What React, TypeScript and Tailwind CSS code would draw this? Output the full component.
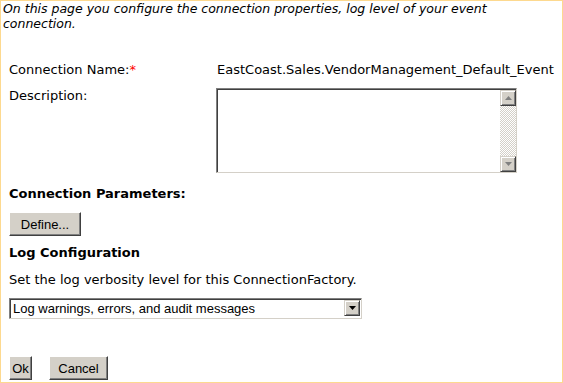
import React from "react";

const font = "font-['DejaVu_Sans',Verdana,sans-serif]";

function ArrowUp() {
  return (
    <svg width="7" height="4" viewBox="0 0 7 4" className="block">
      <path d="M3.5 0 L7 4 L0 4 Z" fill="#808080" />
    </svg>
  );
}

function ArrowDown({ color = "#808080" }: { color?: string }) {
  return (
    <svg width="7" height="4" viewBox="0 0 7 4" className="block">
      <path d="M0 0 L7 0 L3.5 4 Z" fill={color} />
    </svg>
  );
}

function ScrollBtn({ children }: { children: React.ReactNode }) {
  return (
    <div className="flex h-[16px] w-[16px] items-center justify-center border border-t-[#d4d0c8] border-l-[#d4d0c8] border-r-[#404040] border-b-[#404040] bg-[#d4d0c8] shadow-[inset_1px_1px_0_#ffffff,inset_-1px_-1px_0_#808080]">
      {children}
    </div>
  );
}

function Button({ label, className = "" }: { label: string; className?: string }) {
  return (
    <button
      type="button"
      className={
        "h-[24px] border border-t-[#ffffff] border-l-[#ffffff] border-r-[#404040] border-b-[#404040] bg-[#d4d0c8] text-[13px] leading-none text-black shadow-[inset_-1px_-1px_0_#808080] font-['Liberation_Sans',Arial,sans-serif] " +
        className
      }
    >
      {label}
    </button>
  );
}

export default function App() {
  return (
    <div className={"h-[383px] w-[563px] border border-[#fdd98f] bg-white text-[13px] text-black " + font}>
      <p className="pl-[2px] pr-2 text-[12.5px] italic leading-[15px]">
        On this page you configure the connection properties, log level of your event connection.
      </p>

      <div className="pl-[8px]">
        <div className="mt-[31px] flex leading-[16px]">
          <div className="w-[208px] shrink-0">
            Connection Name:<span className="text-[#ff0000]">*</span>
          </div>
          <div className="whitespace-nowrap">EastCoast.Sales.VendorManagement_Default_Event</div>
        </div>

        <div className="mt-[10px] flex leading-[16px]">
          <div className="w-[207px] shrink-0">Description:</div>
          <div className="flex h-[85px] w-[301px] border border-t-[#808080] border-l-[#808080] border-r-[#d4d0c8] border-b-[#d4d0c8] shadow-[inset_1px_1px_0_#404040]">
            <div className="flex-1" />
            <div className="mt-[1px] flex w-[16px] flex-col bg-[repeating-conic-gradient(#d4d0c8_0_25%,#ffffff_0_50%)] bg-[length:2px_2px]">
              <ScrollBtn>
                <ArrowUp />
              </ScrollBtn>
              <div className="flex-1" />
              <ScrollBtn>
                <ArrowDown />
              </ScrollBtn>
            </div>
          </div>
        </div>

        <div className="mt-[13px] font-bold leading-[16px]">Connection Parameters:</div>
        <Button label="Define..." className="mt-[10px] block w-[72px]" />

        <div className="mt-[9px] font-bold leading-[16px]">Log Configuration</div>
        <div className="mt-[11px] leading-[16px]">Set the log verbosity level for this ConnectionFactory.</div>

        <div className="mt-[10px] flex h-[21px] w-[353px] items-stretch border border-t-[#808080] border-l-[#808080] border-r-[#d4d0c8] border-b-[#d4d0c8] shadow-[inset_1px_1px_0_#404040] font-['Liberation_Sans',Arial,sans-serif]">
          <div className="flex flex-1 items-center pl-[3px] text-[13px]">Log warnings, errors, and audit messages</div>
          <div className="mt-[1px] mb-[1px] mr-[1px]">
            <ScrollBtn>
              <ArrowDown color="#000000" />
            </ScrollBtn>
          </div>
        </div>

        <div className="mt-[37px] flex gap-[17px]">
          <Button label="Ok" className="w-[23px]" />
          <Button label="Cancel" className="w-[59px]" />
        </div>
      </div>
    </div>
  );
}
